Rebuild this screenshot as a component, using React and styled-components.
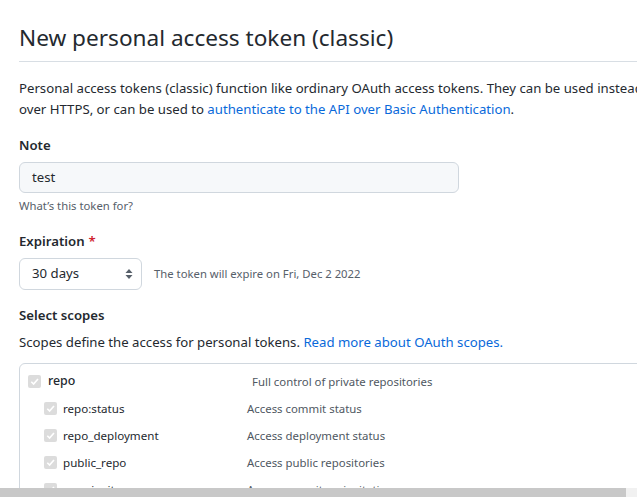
import React from "react";
import styled, { createGlobalStyle } from "styled-components";

const Global = createGlobalStyle`
  html, body { margin: 0; padding: 0; background: #fff; overflow: hidden; }
  body {
    font-family: "Segoe UI", "Noto Sans", "Open Sans", sans-serif;
    color: #24292f;
    font-size: 13.2px;
    line-height: 1.5;
  }
`;

const Page = styled.div`
  width: 900px;
  height: 497px;
  padding: 23px 0 0 19px;
  box-sizing: border-box;
`;

const Subhead = styled.div`
  padding-bottom: 8px;
  border-bottom: 1px solid #d8dee4;
  margin-bottom: 16px;
`;

const Title = styled.h1`
  margin: 0;
  font-size: 22.6px;
  font-weight: 400;
  line-height: 30px;
`;

const Lead = styled.p`
  margin: 0 0 15px;
  line-height: 21px;
  white-space: nowrap;
`;

const Link = styled.a`
  color: #0969da;
  text-decoration: none;
`;

const Group = styled.div`
  margin-bottom: ${(p) => p.$mb ?? 15}px;
`;

const Label = styled.label`
  display: block;
  font-weight: 600;
  line-height: 21px;
  margin-bottom: 6px;
`;

const Required = styled.span`
  color: #cf222e;
  margin-left: 4px;
`;

const Input = styled.div`
  width: 440px;
  height: 31px;
  box-sizing: border-box;
  padding: 0 12px;
  display: flex;
  align-items: center;
  background: #f6f8fa;
  border: 1px solid #d0d7de;
  border-radius: 6px;
`;

const Hint = styled.div`
  margin-top: 4px;
  font-size: 11.3px;
  line-height: 18px;
  color: #57606a;
`;

const Row = styled.div`
  display: flex;
  align-items: center;
  gap: 12px;
`;

const Select = styled.div`
  width: 123px;
  height: 32px;
  box-sizing: border-box;
  padding: 0 8px 0 12px;
  display: flex;
  align-items: center;
  justify-content: space-between;
  border: 1px solid #d0d7de;
  border-radius: 6px;
  background: #fff;
`;

const Note = styled.span`
  font-size: 11.3px;
  color: #57606a;
`;

const Desc = styled.p`
  margin: 0 0 10px;
  line-height: 21px;
`;

const ScopeBox = styled.div`
  border: 1px solid #d0d7de;
  border-radius: 6px;
  padding: 4px 8px;
`;

const ScopeRow = styled.div`
  display: flex;
  align-items: center;
  height: 27px;
  padding-left: ${(p) => (p.$sub ? 16 : 0)}px;
`;

const Box = styled.span`
  width: 13px;
  height: 13px;
  border-radius: 2px;
  background: #dcdcdc;
  display: inline-flex;
  align-items: center;
  justify-content: center;
  flex-shrink: 0;
`;

const ScopeName = styled.span`
  width: ${(p) => p.$w}px;
  padding-left: ${(p) => p.$pl}px;
  box-sizing: border-box;
  font-size: ${(p) => (p.$sub ? 11.6 : 12.4)}px;
  font-weight: ${(p) => (p.$sub ? 400 : 500)};
  color: #24292f;
  flex-shrink: 0;
`;

const ScopeDesc = styled.span`
  font-size: 11.4px;
  color: #4f5862;
`;

const Scrollbar = styled.div`
  position: fixed;
  left: 0;
  right: 0;
  bottom: 0;
  height: 9px;
  display: flex;
  background: #f1f1f1;
`;

const Thumb = styled.div`
  width: 626px;
  background: #c8c8c8;
`;

const Check = () => (
  <Box>
    <svg width="11" height="11" viewBox="0 0 12 12">
      <path d="M2.5 6.3 L5 8.8 L9.8 3.2" fill="none" stroke="#fff" strokeWidth="1.8" />
    </svg>
  </Box>
);

const Arrows = () => (
  <svg width="8" height="12" viewBox="0 0 8 12">
    <path d="M4 1 L7.5 5 H0.5 Z" fill="#57606a" />
    <path d="M4 11 L7.5 7 H0.5 Z" fill="#57606a" />
  </svg>
);

const scopes = [
  { name: "repo", desc: "Full control of private repositories" },
  { name: "repo:status", desc: "Access commit status", sub: true },
  { name: "repo_deployment", desc: "Access deployment status", sub: true },
  { name: "public_repo", desc: "Access public repositories", sub: true },
  { name: "repo:invite", desc: "Access repository invitations", sub: true },
];

export default function App() {
  return (
    <>
      <Global />
      <Page>
        <Subhead>
          <Title>New personal access token (classic)</Title>
        </Subhead>
        <Lead>
          Personal access tokens (classic) function like ordinary OAuth access tokens. They can be used instead of a password for Git
          <br />
          over HTTPS, or can be used to <Link href="#">authenticate to the API over Basic Authentication</Link>.
        </Lead>
        <Group $mb={16}>
          <Label>Note</Label>
          <Input>test</Input>
          <Hint>What’s this token for?</Hint>
        </Group>
        <Group>
          <Label>
            Expiration<Required>*</Required>
          </Label>
          <Row>
            <Select>
              <span>30 days</span>
              <Arrows />
            </Select>
            <Note>The token will expire on Fri, Dec 2 2022</Note>
          </Row>
        </Group>
        <Group $mb={0}>
          <Label>Select scopes</Label>
          <Desc>
            Scopes define the access for personal tokens. <Link href="#">Read more about OAuth scopes.</Link>
          </Desc>
          <ScopeBox>
            {scopes.map((s) => (
              <ScopeRow key={s.name} $sub={s.sub}>
                <Check />
                <ScopeName $sub={s.sub} $w={s.sub ? 190 : 211} $pl={s.sub ? 6 : 7}>
                  {s.name}
                </ScopeName>
                <ScopeDesc>{s.desc}</ScopeDesc>
              </ScopeRow>
            ))}
          </ScopeBox>
        </Group>
      </Page>
      <Scrollbar>
        <Thumb />
      </Scrollbar>
    </>
  );
}
